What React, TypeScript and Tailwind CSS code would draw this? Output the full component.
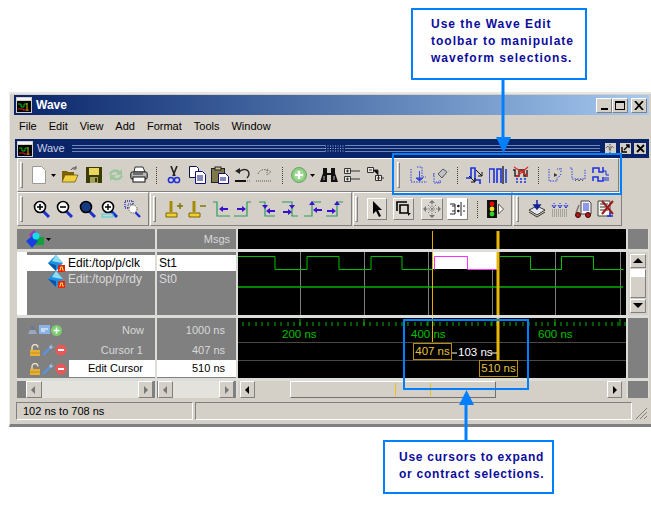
import type { ReactNode } from 'react';

const FACE = 'bg-[#d4d0c8]';
const RAISED = 'border border-t-white border-l-white border-r-[#808080] border-b-[#808080]';
const SUNKEN = 'border border-t-[#808080] border-l-[#808080] border-r-white border-b-white';

function Ico({ children, className = '', w = 18, h = 18 }: { children: ReactNode; className?: string; w?: number; h?: number }) {
  return (
    <svg width={w} height={h} viewBox={`0 0 ${w} ${h}`} className={`shrink-0 ${className}`}>
      {children}
    </svg>
  );
}

function Grip({ className = '' }: { className?: string }) {
  return <div className={`w-[3px] h-[26px] shrink-0 border border-t-white border-l-white border-r-[#808080] border-b-[#808080] ${className}`} />;
}

function Sep({ className = '' }: { className?: string }) {
  return <div className={`w-px h-[17px] shrink-0 border-l border-dotted border-[#404040] ${className}`} />;
}

function Drop({ className = '' }: { className?: string }) {
  return (
    <Ico w={5} h={3} className={className}>
      <path d="M0 0h5L2.5 3z" fill="#000" />
    </Ico>
  );
}

function AppIcon({ className = '' }: { className?: string }) {
  return (
    <Ico w={16} h={16} className={className}>
      <rect width="16" height="16" fill="#d4d0c8" />
      <rect x="1" y="4" width="14" height="11" fill="#000" />
      <rect x="1" y="1" width="14" height="2" fill="#f4f4f4" />
      <path d="M2 7h3v3h3V7h3" stroke="#00c000" fill="none" />
      <path d="M2 12h5v1h6" stroke="#e02020" fill="none" />
      <path d="M11 6v8" stroke="#c8c000" />
    </Ico>
  );
}

function Mag({ children, fill = '#fff', className = '' }: { children?: ReactNode; fill?: string; className?: string }) {
  return (
    <Ico className={className}>
      <path d="M10 11l6 6" stroke="#1f32c8" strokeWidth="3" />
      <circle cx="7" cy="7" r="5.5" fill={fill} stroke="#000" strokeWidth="1.6" />
      {children}
    </Ico>
  );
}

function DotWave({ d, extra }: { d: string; extra?: ReactNode }) {
  return (
    <>
      <path d={d} fill="none" stroke="#2a3ee0" strokeDasharray="1.4 1.2" />
      {extra}
    </>
  );
}

function Step({ d, arrows }: { d: string; arrows: string }) {
  return (
    <>
      <path d={d} fill="none" stroke="#2f9a5a" strokeWidth="1.2" />
      <path d={arrows} fill="#3a10d0" />
    </>
  );
}

const ArrowL = (x: number, y: number) => `M${x} ${y}l4-3v2h5v2h-5v2z`;
const ArrowR = (x: number, y: number) => `M${x} ${y}l-4-3v2h-5v2h5v2z`;

function Row1() {
  return (
    <div className={`${FACE} ${RAISED} h-[34px] w-[602px] ml-[3px] flex items-center`}>
      <Grip className="ml-[2px]" />
      <Ico className="ml-[7px]"><path d="M2.5 .5h9l4 4v13h-13z" fill="#fff" stroke="#9a9a9a" /></Ico>
      <Drop className="ml-[3px]" />
      <Ico className="ml-[5px]">
        <path d="M1 5h5l1 1h6v3H5l-4 7z" fill="#806000" />
        <path d="M4 9h13l-3 7H1z" fill="#f0d040" stroke="#605000" strokeWidth=".7" />
        <path d="M10 4c1-2 3-3 5-2M15 0v3h-3" stroke="#555" fill="none" />
      </Ico>
      <Ico className="ml-[6px]">
        <rect x="1" y="1" width="16" height="16" fill="#3c3c00" />
        <rect x="4" y="2" width="10" height="7" fill="#e8d860" />
        <rect x="5" y="11" width="8" height="6" fill="#a0a060" />
        <rect x="10" y="12" width="2" height="4" fill="#3c3c00" />
      </Ico>
      <Ico className="ml-[4px]">
        <path d="M2 8c1-4 7-6 11-3l2-2v6H9l2-2C8 5 5 6 4 9z" fill="#9cc69c" />
        <path d="M16 10c-1 4-7 6-11 3l-2 2V9h6l-2 2c3 2 6 1 7-2z" fill="#9cc69c" />
      </Ico>
      <Ico className="ml-[5px]">
        <path d="M5 1h8l2 5H4z" fill="#fff" stroke="#333" />
        <rect x=".8" y="6" width="16.4" height="7" rx="1.5" fill="#b8b8b8" stroke="#111" />
        <rect x="3" y="11" width="12" height="5" fill="#fff" stroke="#111" />
        <path d="M3 8h10" stroke="#222" />
      </Ico>
      <Sep className="ml-[8px]" />
      <Ico className="ml-[8px]">
        <path d="M6 0l4 10M12 0L8 10" stroke="#222" strokeWidth="1.6" />
        <circle cx="6" cy="14" r="2.6" fill="none" stroke="#2030d8" strokeWidth="1.5" />
        <circle cx="12" cy="14" r="2.6" fill="none" stroke="#2030d8" strokeWidth="1.5" />
      </Ico>
      <Ico className="ml-[5px]">
        <path d="M1.5 .5h7l2 2v9h-9z" fill="#fff" stroke="#101050" />
        <path d="M7.5 5.5h7l3 3v9h-10z" fill="#fff" stroke="#101078" />
        <path d="M9 10h6M9 12h6M9 14h6" stroke="#101078" />
      </Ico>
      <Ico className="ml-[5px]">
        <rect x=".5" y="2.5" width="13" height="14" fill="#807848" stroke="#222" />
        <rect x="4" y="1" width="6" height="3" fill="#c8c090" stroke="#222" />
        <path d="M7.5 7.5h7l3 3v7h-10z" fill="#fff" stroke="#101078" />
        <path d="M9 12h6M9 14h6" stroke="#101078" />
      </Ico>
      <Ico className="ml-[5px]">
        <path d="M5 6c4-4 10-3 10 2 0 2-1 3-2 4" fill="none" stroke="#222" strokeWidth="1.4" />
        <path d="M1 5l5-3v6z" fill="#222" />
        <rect x="1" y="14" width="11" height="2" fill="#111" />
        <path d="M13 15h4" stroke="#777" strokeDasharray="1 1" />
      </Ico>
      <Ico className="ml-[3px]">
        <path d="M3 8c1-4 7-6 10-3" fill="none" stroke="#666" strokeDasharray="1.5 1.2" />
        <path d="M16 6l-4-3v6z" fill="none" stroke="#666" strokeDasharray="1 1" />
        <path d="M1 15h15" stroke="#555" strokeDasharray="1 1" />
      </Ico>
      <Sep className="ml-[9px]" />
      <Ico className="ml-[7px]">
        <circle cx="9" cy="9" r="7.5" fill="#8ccc80" stroke="#6aa864" />
        <circle cx="9" cy="9" r="5" fill="#a8dc9c" />
        <path d="M9 5v8M5 9h8" stroke="#fff" strokeWidth="2.2" />
      </Ico>
      <Drop className="ml-[2px]" />
      <Ico className="ml-[5px]">
        <path d="M3 2h4v5h4V2h4v5l3 9h-7V9H7v7H0l3-9z" fill="#111" />
        <path d="M4 10v4M14 10v4" stroke="#bbb" />
      </Ico>
      <Ico className="ml-[5px]">
        <path d="M1.5 2.5h6v5h-6zM1.5 10.5h6v5h-6z" fill="#e8e6e0" stroke="#333" />
        <path d="M3 5h3M4.5 3.5v3M3 13h3M4.5 11.5v3M8 5h9M8 13h9" stroke="#333" />
      </Ico>
      <Ico className="ml-[5px]">
        <path d="M1.5 1.5h6v5h-6zM9.5 9.5h6v5h-6z" fill="#e8e6e0" stroke="#333" />
        <path d="M3 4h3M11 12h3M12.5 10v4M7 4h5v5M15 12h3" stroke="#333" />
      </Ico>
      <Grip className="ml-[13px]" />
      <Ico className="ml-[10px]">
        <DotWave d="M1 3v13h16M7 1h5v10h4" extra={<path d="M6 12h7l-3.5 3zM9.5 5v7" fill="#3848d0" stroke="#3848d0" />} />
      </Ico>
      <Ico className="ml-[4px]">
        <DotWave d="M2 7v10h6V14" />
        <path d="M6 8l5-5 4 3-5 6z" fill="#c0c0c8" stroke="#555" />
        <path d="M14 5h4" stroke="#60d0d0" strokeDasharray="1 1" />
        <path d="M1 9h1M4 16h6" stroke="#2a3ee0" strokeDasharray="1 1" />
      </Ico>
      <Sep className="ml-[7px]" />
      <Ico className="ml-[8px]">
        <path d="M0 12h5V2h4v12h5v4" fill="none" stroke="#1b2fe0" strokeWidth="1.6" />
        <path d="M10 4l6 6M16 6v4h-4M3 10l6 6M9 12v4H5" stroke="#111" fill="none" />
      </Ico>
      <Ico className="ml-[5px]">
        <path d="M0 17V3h5v14M8 17V3h4v14" fill="none" stroke="#1b2fe0" strokeWidth="1.6" />
        <path d="M14 0v18" stroke="#555" strokeWidth="2" />
        <path d="M17 3v14" stroke="#1b2fe0" strokeWidth="1.5" />
      </Ico>
      <Ico className="ml-[5px]">
        <path d="M1 4h2v6h4V4h5v6h3V4" fill="none" stroke="#222" strokeWidth="1.4" />
        <path d="M5 12v5M9 12v5M13 12v5" stroke="#1b2fe0" strokeWidth="1.5" strokeDasharray="2 1" />
        <path d="M2 1l14 9M16 1L4 11" stroke="#f02020" strokeWidth="1.2" />
      </Ico>
      <Sep className="ml-[8px]" />
      <Ico className="ml-[8px]">
        <DotWave d="M2 3v12h8V11M14 2v5M14 8l-3 4M10 9h-3" />
        <path d="M7 7l3 2-3 2z" fill="#333" />
        <path d="M10 3h4" stroke="#2a3ee0" strokeDasharray="1 1" />
      </Ico>
      <Ico className="ml-[4px]">
        <DotWave d="M1 2h2v11h13V3" />
        <path d="M6 15l2-2 2 2 2-2 2 2" stroke="#222" fill="none" strokeDasharray="1 1" />
      </Ico>
      <Ico className="ml-[5px]">
        <path d="M1 7V2h6v4h4V1M1 15v-4h5v4h5v-4" fill="none" stroke="#1b2fe0" strokeWidth="1.5" />
        <path d="M11 5h3v4h3M12 12h5M12 14h5" fill="none" stroke="#1b2fe0" />
      </Ico>
    </div>
  );
}

function Row2() {
  return (
    <div className="h-[34px] ml-[3px] flex gap-px">
      <div className={`${FACE} ${RAISED} w-[132px] flex items-center`}>
        <Grip className="ml-[2px]" />
        <Mag className="ml-[10px]"><path d="M4 7h6M7 4v6" stroke="#000" strokeWidth="1.6" /></Mag>
        <Mag className="ml-[5px]"><path d="M4 7h6" stroke="#000" strokeWidth="1.6" /></Mag>
        <Mag className="ml-[5px]" fill="#143c82" />
        <Mag className="ml-[4px]">
          <path d="M4 7h6M7 4v6" stroke="#000" strokeWidth="1.4" />
          <rect x="1" y="14" width="11" height="3" fill="none" stroke="#40d0e0" />
        </Mag>
        <Ico className="ml-[5px]">
          <path d="M1 1h8v7H1z" fill="none" stroke="#2830a0" strokeDasharray="1 1" strokeWidth="1.4" />
          <path d="M4 4h4v4H4z" fill="none" stroke="#2830a0" strokeDasharray="1 1" />
          <path d="M11 12l5 5" stroke="#1f32c8" strokeWidth="2.4" />
          <circle cx="9" cy="9" r="4" fill="#fff" stroke="#555" strokeDasharray="1.5 1" />
        </Ico>
      </div>
      <div className={`${FACE} ${RAISED} w-[202px] flex items-center`}>
        <Grip className="ml-[2px]" />
        <Ico className="ml-[9px]">
          <path d="M6 1v11" stroke="#a88a00" strokeWidth="3" />
          <path d="M1 13h11v4H1z" fill="#f0d030" stroke="#7a6400" />
          <path d="M12 6h6M15 3v6" stroke="#807000" strokeWidth="1.4" />
        </Ico>
        <Ico className="ml-[5px]">
          <path d="M6 1v11" stroke="#a88a00" strokeWidth="3" />
          <path d="M1 13h11v4H1z" fill="#f0d030" stroke="#7a6400" />
          <path d="M12 6h6" stroke="#807000" strokeWidth="1.4" />
        </Ico>
        <Ico className="ml-[6px]"><Step d="M1 2h4v14h13" arrows={ArrowL(7, 9)} /></Ico>
        <Ico className="ml-[4px]"><Step d="M0 16h13V2h4" arrows={ArrowR(12, 9)} /></Ico>
        <Ico className="ml-[6px]"><Step d="M1 2h6v14h10" arrows={`M4 5h6l-3 4z${ArrowL(8, 11)}`} /></Ico>
        <Ico className="ml-[5px]"><Step d="M1 2h10v14h6" arrows={`M8 5h6l-3 4z${ArrowR(11, 12)}`} /></Ico>
        <Ico className="ml-[5px]"><Step d="M0 16h8V2h9" arrows={`M8 1l3 4H5z${ArrowL(9, 10)}`} /></Ico>
        <Ico className="ml-[4px]"><Step d="M0 16h11V2h6" arrows={`M11 1l3 4H8z${ArrowR(10, 11)}`} /></Ico>
      </div>
      <div className={`${FACE} ${RAISED} w-[159px] flex items-center`}>
        <Grip className="ml-px" />
        <div className={`ml-[9px] w-[20px] h-[22px] bg-[#dcd8d0] ${RAISED} flex items-center justify-center`}>
          <Ico w={14} h={16}><path d="M3 0v13l3-3 3 6 2-1-3-6h4z" fill="#000" /></Ico>
        </div>
        <div className={`ml-[6px] w-[21px] h-[22px] bg-[#dcd8d0] ${RAISED} flex items-center justify-center`}>
          <Ico w={16} h={16}><path d="M1 10V1h10M4 4h8v8H4z" fill="none" stroke="#000" strokeWidth="1.6" /><path d="M12 15l3-3h-3z" fill="#000" /></Ico>
        </div>
        <div className={`ml-[7px] w-[22px] h-[22px] bg-[#dcd8d0] ${RAISED} flex items-center justify-center`}>
          <Ico w={18} h={18}>
            <path d="M9 0l3 3H6zM9 18l3-3H6zM0 9l3-3v6zM18 9l-3-3v6z" fill="#777" />
            <path d="M9 3v12M3 9h12M5 5l8 8M13 5l-8 8" stroke="#777" strokeDasharray="1.5 1" />
          </Ico>
        </div>
        <div className={`ml-[4px] w-[21px] h-[22px] bg-white ${RAISED} flex items-center justify-center`}>
          <Ico w={17} h={16}>
            <path d="M1 3h5v10H1M12 1v14" fill="none" stroke="#222" />
            <path d="M3 5h3M3 10h3M8 5l2-1v2zM8 10l2-1v2zM14 5h2M14 10h2" stroke="#222" />
          </Ico>
        </div>
        <Sep className="ml-[9px]" />
        <Ico w={18} h={18} className="ml-[8px]">
          <rect x="1" y="0" width="10" height="18" fill="#111" />
          <circle cx="6" cy="4" r="2.4" fill="#f00000" />
          <circle cx="6" cy="9" r="2.4" fill="#f0e020" />
          <circle cx="6" cy="14" r="2.4" fill="#30d030" />
          <path d="M12.5 4l5 5-5 5z" fill="#f4f2ec" stroke="#555" />
        </Ico>
      </div>
      <div className={`${FACE} ${RAISED} w-[109px] flex items-center`}>
        <Grip className="ml-[2px]" />
        <Ico className="ml-[9px]">
          <path d="M1 10l8-4 8 4-8 5z" fill="#e8e8e8" stroke="#333" />
          <path d="M1 12l8 5 8-5" stroke="#333" fill="none" />
          <path d="M9 0v7M6 5l3 4 3-4z" stroke="#1420a0" fill="#1420a0" strokeWidth="1.5" />
        </Ico>
        <Ico className="ml-[5px]">
          <path d="M1 10h16M1 12h16M1 14h16M1 16h16" stroke="#777" strokeDasharray="1 1" />
          <path d="M3 3v5M9 3v5M15 3v5" stroke="#1b2fe0" strokeDasharray="1 1" />
          <path d="M1 5l2 3 2-3M7 5l2 3 2-3M13 5l2 3 2-3" stroke="#1b2fe0" fill="none" />
        </Ico>
        <Ico className="ml-[5px]">
          <path d="M7 1h8l2 2v11H7z" fill="#f4f4f4" stroke="#444" />
          <path d="M9 4h6M9 6h6M9 8h6M9 10h6" stroke="#2a3ee0" />
          <path d="M5 5l-3 8" stroke="#777" strokeWidth="1.5" />
          <circle cx="4" cy="15" r="2.5" fill="#b01818" stroke="#400" />
          <circle cx="14" cy="15" r="2.5" fill="#b01818" stroke="#400" />
        </Ico>
        <Ico className="ml-[5px]">
          <path d="M1 1h12v15H1z" fill="#f4f4f0" stroke="#444" />
          <path d="M3 4h8M3 7h8M3 10h8" stroke="#333" />
          <path d="M5 1l11 13M16 1L5 14" stroke="#a01818" strokeWidth="2" />
          <path d="M13 12v5M10 16h6" stroke="#1b2fe0" strokeWidth="1.4" />
        </Ico>
      </div>
    </div>
  );
}

function Diamond({ className = '' }: { className?: string }) {
  return (
    <Ico w={17} h={17} className={className}>
      <path d="M8 0l7 8-7 8-8-8z" fill="#1e90e0" />
      <path d="M8 0l7 8-7-1-4-1z" fill="#8edcf4" />
      <path d="M8 16l-8-8 8 2z" fill="#0a55a8" />
      <rect x="10" y="10" width="7" height="7" fill="#f02010" />
      <path d="M11 15h1.5v-3h2v3H16" stroke="#ffe040" fill="none" />
    </Ico>
  );
}

function SmallArrow({ dir, color = '#000' }: { dir: 'l' | 'r' | 'u' | 'd'; color?: string }) {
  const d = { l: 'M6 1v8L2 5z', r: 'M3 1v8l4-4z', u: 'M5 2l5 5H0z', d: 'M5 7L0 2h10z' }[dir];
  return (
    <Ico w={10} h={10}>
      <path d={d} fill={color} />
    </Ico>
  );
}

function ScrollBtn({ dir, color, className = '' }: { dir: 'l' | 'r' | 'u' | 'd'; color?: string; className?: string }) {
  return (
    <div className={`shrink-0 flex items-center justify-center bg-[#d4d0c8] ${RAISED} ${className}`}>
      <SmallArrow dir={dir} color={color} />
    </div>
  );
}

function Lock() {
  return (
    <Ico w={12} h={12}>
      <path d="M3 6V3.5a3 3 0 0 1 6 0" fill="none" stroke="#e8e0c0" strokeWidth="1.4" />
      <rect x="1" y="6" width="10" height="6" fill="#e8b030" />
      <path d="M1 9h10" stroke="#c89020" />
    </Ico>
  );
}

function Wrench() {
  return (
    <Ico w={12} h={12}>
      <path d="M1 11l7-7" stroke="#5a94e0" strokeWidth="2.4" />
      <path d="M7 3l3-3-1 3 3-1-3 3z" fill="#a8c8f0" />
    </Ico>
  );
}

function Minus() {
  return (
    <Ico w={12} h={12}>
      <circle cx="6" cy="6" r="5.5" fill="#e85858" />
      <path d="M3 6h6" stroke="#fff" strokeWidth="2" />
    </Ico>
  );
}

function CursorIcons() {
  return (
    <div className="flex items-center gap-px w-[41px] pl-[12px] shrink-0">
      <Lock />
      <Wrench />
      <Minus />
    </div>
  );
}

function SignalColumn() {
  return (
    <div className="bg-[#808080] h-full relative text-[12px] leading-[16px]">
      <div className="h-[3px] ml-[10px]" />
      <div className="absolute left-0 top-0 bottom-0 w-[10px] bg-white" />
      <div className="bg-white h-[16px] flex items-center pl-[31px] relative text-black">
        <Diamond className="mr-[2px]" />
        <span className="pl-px">Edit:/top/p/clk</span>
      </div>
      <div className="h-[16px] flex items-center pl-[31px] relative text-[#d8d8d8]">
        <Diamond className="mr-[2px]" />
        <span className="pl-px">Edit:/top/p/rdy</span>
      </div>
    </div>
  );
}

function Ruler() {
  const ticks = Array.from({ length: 61 }, (_, i) => 243 + i * 6.36);
  return (
    <div className="relative h-full bg-black text-[11.5px] leading-[14px]">
      <svg width="388" height="60" viewBox="238 318 388 60" className="block">
        {ticks.map((x, i) => (
          <path key={i} d={`M${Math.round(x)} 322v4`} stroke="#00b000" />
        ))}
        {[300, 364, 428, 492, 555, 620].map((x) => (
          <path key={x} d={`M${x} 319v7`} stroke="#00b000" />
        ))}
        <path d="M238 342.5h388M238 360.5h388" stroke="#484848" />
        <path d="M432.5 318v24" stroke="#e0b000" />
        <path d="M498 318v42" stroke="#e8b800" strokeWidth="3" />
        <path d="M452 353h5M491 353h6" stroke="#fff" />
      </svg>
      <span className="absolute left-[44px] top-[9px] text-[#00c000]">200 ns</span>
      <span className="absolute left-[173px] top-[9px] text-[#00c000]">400 ns</span>
      <span className="absolute left-[300px] top-[9px] text-[#00c000]">600 ns</span>
      <span className="absolute left-[175px] top-[25px] w-[39px] h-[17px] border border-[#b89000] bg-black text-[#e4c040] text-center">407 ns</span>
      <span className="absolute left-[220px] top-[27px] text-white">103 ns</span>
      <span className="absolute left-[241px] top-[42px] w-[39px] h-[17px] border border-[#b89000] bg-black text-[#e4c040] text-center">510 ns</span>
    </div>
  );
}

function Pane() {
  return (
    <div className="ml-[3px] mt-[3px] w-[632px] bg-[#dcdcd8] grid grid-cols-[138px_79px_388px_20px] grid-rows-[20px_63px_60px_17px] gap-x-[2px] gap-y-[3px] text-[11px] leading-[14px] text-[#d8d8d8]">
      {/* header */}
      <div className="bg-[#808080] flex items-center pl-[9px]">
        <Ico w={19} h={18}>
          <path d="M8 0l5 5-5 5-5-5z" fill="#a030c0" />
          <rect x="9" y="7" width="9" height="8" fill="#10a040" />
          <path d="M6 6l6 5-6 7-6-7z" fill="#1840e0" />
          <circle cx="10" cy="6" r="3.5" fill="#10e0e8" />
        </Ico>
        <Drop className="ml-[1px]" />
      </div>
      <div className="bg-[#808080] flex items-center justify-end pr-[6px]">Msgs</div>
      <svg width="388" height="20" viewBox="238 229 388 20" className="block bg-black">
        <path d="M432.5 231v18" stroke="#e0b000" />
        <path d="M498 231v18" stroke="#e8b800" strokeWidth="3" />
      </svg>
      <div className="bg-[#808080]" />

      {/* signals */}
      <SignalColumn />
      <div className="bg-[#808080] text-[12px] leading-[16px]">
        <div className="h-[3px]" />
        <div className="h-[16px] bg-white text-black pl-[2px]">St1</div>
        <div className="h-[16px] pl-[2px]">St0</div>
      </div>
      <svg width="388" height="63" viewBox="238 252 388 63" className="block bg-black">
        {[300, 364, 428, 492, 555, 620].map((x) => (
          <path key={x} d={`M${x}.5 252v63`} stroke="#808080" />
        ))}
        <rect x="433" y="252" width="64" height="17" fill="#ffffff" />
        <path d="M238 256.5h37v13h32v-13h32v13h32v-13h31v13h31" fill="none" stroke="#00c000" />
        <path d="M434.5 269.5v-13h33v13h30" fill="none" stroke="#ff30ff" />
        <path d="M497.5 269v-13" stroke="#3050ff" />
        <path d="M500 256.5h30.5v13h31v-13h32v13h30" fill="none" stroke="#00c000" />
        <path d="M238 287h385" stroke="#00b000" strokeWidth="1.6" />
        <path d="M432.5 252v63" stroke="#e0b000" />
        <path d="M498 252v63" stroke="#e8b800" strokeWidth="3" />
      </svg>
      <div className="flex flex-col items-center bg-[#d4d0c8] py-[2px] gap-px">
        <ScrollBtn dir="u" className="w-[16px] h-[14px] shrink-0" />
        <div className={`w-[16px] flex-1 bg-[#d4d0c8] ${RAISED}`}>
          <div className="h-[7px] bg-white" />
        </div>
        <ScrollBtn dir="d" className="w-[16px] h-[14px] shrink-0" />
      </div>

      {/* cursors */}
      <div className="bg-[#808080] pt-[2px]">
        <div className="h-[20px] flex items-center">
          <div className="flex items-center gap-px w-[41px] pl-[10px] shrink-0">
            <Ico w={11} h={11}>
              <path d="M1 9l2-4h5l2 4z" fill="#9aa8c0" />
              <circle cx="5.5" cy="3" r="2" fill="#6a7890" />
            </Ico>
            <Ico w={11} h={11}>
              <rect width="11" height="9" fill="#8ab4e8" />
              <path d="M2 4h7M2 6h4" stroke="#fff" />
            </Ico>
            <Ico w={11} h={11}>
              <circle cx="5.5" cy="5.5" r="5.5" fill="#7ccc70" />
              <path d="M5.5 2.5v6M2.5 5.5h6" stroke="#fff" strokeWidth="1.6" />
            </Ico>
          </div>
          <span className="ml-auto pr-[11px]">Now</span>
        </div>
        <div className="h-[20px] flex items-center">
          <CursorIcons />
          <span className="ml-auto pr-[12px]">Cursor 1</span>
        </div>
        <div className="h-[17px] flex items-center">
          <CursorIcons />
          <span className="ml-auto w-[86px] pr-[12px] h-full leading-[17px] bg-white text-black text-right">Edit Cursor</span>
        </div>
      </div>
      <div className="bg-[#808080] pt-[2px] text-right">
        <div className="h-[20px] leading-[20px] pr-[11px]">1000 ns</div>
        <div className="h-[20px] leading-[20px] pr-[11px]">407 ns</div>
        <div className="h-[17px] leading-[17px] pr-[11px] bg-white text-black">510 ns</div>
      </div>
      <Ruler />
      <div className="bg-[#808080]" />

      {/* scrollbars */}
      <div className="bg-[#808080] flex pl-[9px] pr-[2px]">
        <ScrollBtn dir="l" color="#777" className="w-[16px]" />
        <div className="flex-1 bg-[#e4e2dc]" />
        <ScrollBtn dir="r" color="#777" className="w-[15px]" />
      </div>
      <div className="bg-[#808080] flex pl-px pr-[2px]">
        <ScrollBtn dir="l" color="#777" className="w-[15px]" />
        <div className="flex-1 bg-[#e4e2dc]" />
        <ScrollBtn dir="r" color="#777" className="w-[15px]" />
      </div>
      <div className="bg-[#d4d0c8] flex relative">
        <ScrollBtn dir="l" className="w-[15px] ml-[2px]" />
        <div className="ml-[35px] w-[206px] bg-[#d4d0c8] border border-t-white border-l-white border-r-[#707070] border-b-[#707070] relative">
          <div className="absolute left-[104px] top-[1px] bottom-[1px] w-px bg-[#e8c020]" />
          <div className="absolute left-[139px] top-[1px] bottom-[1px] w-px bg-[#e8c020]" />
        </div>
        <ScrollBtn dir="r" className="w-[15px] ml-auto mr-[4px]" />
      </div>
      <div className="bg-[#808080]" />
    </div>
  );
}

export default function App() {
  return (
    <div className="relative w-[651px] h-[515px] bg-white overflow-hidden font-['Liberation_Sans',sans-serif] text-black">
      {/* top callout */}
      <div className="h-[92px] pt-[8px] pl-[411px]">
        <div className="w-[176px] h-[72px] border-2 border-[#0080ff] pl-[18px] pt-[6px] font-bold text-[12px] leading-[17px] tracking-[1px] text-[#0c0c9c] whitespace-nowrap">
          Use the Wave Edit
          <br />
          toolbar to manipulate
          <br />
          waveform selections.
        </div>
      </div>

      {/* window */}
      <div className={`ml-[9px] w-[642px] h-[335px] pl-[4px] pt-[3px] pr-[3px] ${FACE} border-l border-[#f0eee8] border-t-2 border-b-[3px] border-b-[#808080] border-t-[#e8e6e0]`}>
        <div className="h-[20px] w-[635px] -mt-[2px] pl-[2px] flex items-center bg-gradient-to-r from-[#0a246a] to-[#a6caf0]">
          <AppIcon />
          <span className="ml-[4px] text-[12px] font-bold text-white">Wave</span>
          <div className="ml-auto flex items-center mr-[2px]">
            <div className={`w-[16px] h-[15px] ${FACE} ${RAISED} flex items-end justify-center pb-[2px]`}>
              <div className="w-[7px] h-[2px] bg-black" />
            </div>
            <div className={`w-[16px] h-[15px] ${FACE} ${RAISED} flex items-center justify-center`}>
              <div className="w-[10px] h-[9px] border border-t-2 border-black" />
            </div>
            <div className={`ml-[3px] w-[16px] h-[15px] ${FACE} ${RAISED} flex items-center justify-center`}>
              <Ico w={10} h={9}><path d="M1 0l8 9M9 0L1 9" stroke="#000" strokeWidth="1.8" /></Ico>
            </div>
          </div>
        </div>
        <div className="h-[22px] flex items-center gap-[12px] pl-[5px] text-[11px]">
          <span>File</span>
          <span>Edit</span>
          <span>View</span>
          <span>Add</span>
          <span>Format</span>
          <span>Tools</span>
          <span>Window</span>
        </div>
        <div className="mt-[2px] ml-[1px] h-[19px] w-[634px] bg-[#0a246a] flex items-center pl-[2px] pr-[3px]">
          <AppIcon />
          <span className="ml-[4px] text-[11px] text-[#c8d0e4]">Wave</span>
          <div className="ml-[7px] flex-1 flex items-center">
            <div className="flex-1 flex flex-col gap-[2px]">
              <div className="h-px bg-[#7088b8]" />
              <div className="h-px bg-[#7088b8]" />
              <div className="h-px bg-[#7088b8]" />
            </div>
            <Ico w={20} h={7}>
              <path d="M0 1h20M0 3.5h20M0 6h20" stroke="#a8b8d8" strokeDasharray="1 1.5" />
            </Ico>
            <div className="w-[255px] flex flex-col gap-[2px]">
              <div className="h-px bg-[#7088b8]" />
              <div className="h-px bg-[#7088b8]" />
              <div className="h-px bg-[#7088b8]" />
            </div>
          </div>
          <div className={`ml-[5px] w-[11px] h-[11px] ${FACE} flex items-center justify-center`}>
            <Ico w={9} h={9}><path d="M0 4l2-2 2 4 2-4 2 2M4 0v9" stroke="#444" fill="none" strokeDasharray="1 .6" /></Ico>
          </div>
          <div className={`ml-[4px] w-[11px] h-[11px] ${FACE} flex items-center justify-center`}>
            <Ico w={9} h={9}><path d="M1 3v5h5M3 6l5-5M5 1h3v3" stroke="#000" fill="none" strokeWidth="1.4" /></Ico>
          </div>
          <div className={`ml-[3px] w-[12px] h-[11px] ${FACE} flex items-center justify-center`}>
            <Ico w={9} h={9}><path d="M1 1l7 7M8 1L1 8" stroke="#000" strokeWidth="1.8" /></Ico>
          </div>
        </div>
        <Row1 />
        <Row2 />
        <Pane />
        {/* status */}
        <div className="mt-[4px] h-[18px] ml-[2px] flex text-[11px] leading-[16px]">
          <div className={`w-[177px] pl-[6px] ${SUNKEN}`}>102 ns to 708 ns</div>
          <div className={`ml-[2px] w-[438px] ${SUNKEN}`} />
          <Ico w={16} h={18} className="self-end">
            <path d="M4 17L15 6M8 17l7-7M12 17l3-3" stroke="#808080" />
          </Ico>
        </div>
      </div>

      {/* bottom callout */}
      <div className="pt-[13px] pl-[383px]">
        <div className="w-[171px] h-[54px] border-2 border-[#0080ff] pl-[14px] pt-[7px] font-bold text-[12px] leading-[17px] tracking-[.75px] text-[#0c0c9c] whitespace-nowrap">
          Use cursors to expand
          <br />
          or contract selections.
        </div>
      </div>

      {/* overlays */}
      <div className="absolute left-[392px] top-[153px] w-[230px] h-[42px] border-2 border-[#0080ff]" />
      <div className="absolute left-[403px] top-[319px] w-[126px] h-[71px] border-2 border-[#0080ff]" />
      <svg className="absolute left-[490px] top-[80px]" width="28" height="74" viewBox="0 0 28 74">
        <path d="M13 0v58" stroke="#0080ff" strokeWidth="3" />
        <path d="M6 57h15l-7.5 16z" fill="#0080ff" />
      </svg>
      <svg className="absolute left-[452px] top-[389px]" width="28" height="52" viewBox="0 0 28 52">
        <path d="M14 14v38" stroke="#0080ff" strokeWidth="3" />
        <path d="M7 16h15L14.5 1z" fill="#0080ff" />
      </svg>
    </div>
  );
}
